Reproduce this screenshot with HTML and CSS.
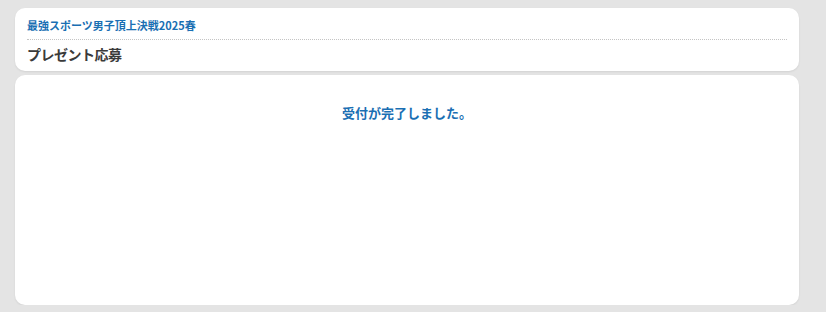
FILE: index.html
```html
<!DOCTYPE html>
<html lang="ja">
  <head>
    <meta charset="utf-8">
    <title>プレゼント応募</title>
    <link rel="stylesheet" href="styles.css">
  </head>
  <body>
    <div class="page">
      <div class="card header-card">
        <div class="event-title">最強スポーツ男子頂上決戦2025春</div>
        <h1 class="page-title">プレゼント応募</h1>
      </div>
      <div class="card body-card">
        <p class="message">受付が完了しました。</p>
      </div>
    </div>
  </body>
</html>
```
FILE: styles.css
```css
html, body {
  margin: 0;
  padding: 0;
}
body {
  background-color: #e4e4e4;
  font-family: "Noto Sans CJK JP", "Noto Sans", sans-serif;
  color: #333;
}
.page {
  margin: 8px 27px 0 15px;
  display: flex;
  flex-direction: column;
  gap: 4px;
}
.card {
  background-color: #fff;
  border-radius: 10px;
  box-shadow: 0 1px 2px rgba(0, 0, 0, 0.08);
}
.header-card {
  padding: 8px 12px 7px;
}
.event-title {
  font-size: 11px;
  line-height: 18px;
  font-weight: bold;
  color: #1a6fb3;
  padding-bottom: 5px;
  border-bottom: 1px dotted #c4c4c4;
}
.page-title {
  margin: 4px 0 0;
  font-size: 14px;
  letter-spacing: -0.5px;
  line-height: 20px;
  font-weight: bold;
  color: #3a3a3a;
}
.body-card {
  height: 230px;
  box-sizing: border-box;
  padding-top: 28px;
}
.message {
  margin: 0;
  text-align: center;
  font-size: 13px;
  line-height: 20px;
  font-weight: bold;
  color: #1a6fb3;
}
```
